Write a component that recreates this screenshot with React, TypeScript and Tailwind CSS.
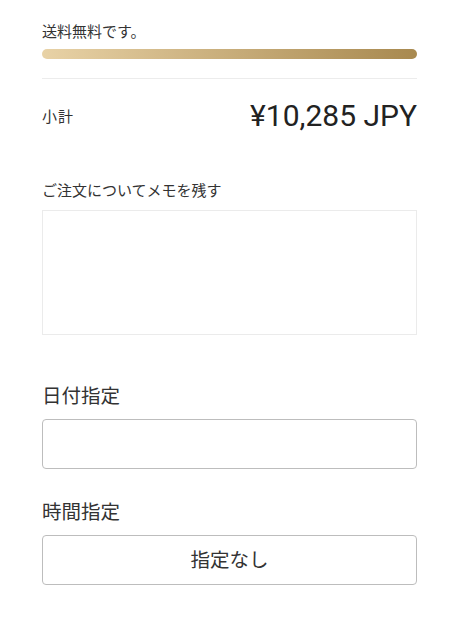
import React from 'react';

const App: React.FC = () => {
  return (
    <div className="min-h-screen w-full bg-white pl-[42px] pr-[57px] pt-[20px] font-['Noto_Sans','Noto_Sans_CJK_JP',sans-serif] text-[#333]">
      <p className="text-[15px] leading-[22px]">送料無料です。</p>
      <div className="mt-[7px] h-[10px] w-full rounded-full bg-gradient-to-r from-[#e8d2a6] to-[#a8894f]" />
      <div className="mt-[19px] h-px w-full bg-[#ececec]" />

      <div className="mt-[19px] flex items-center justify-between">
        <span className="text-[15px] leading-[22px] tracking-[1px]">小計</span>
        <span className="font-['Roboto',sans-serif] text-[30px] leading-[36px] text-[#222]">¥10,285 JPY</span>
      </div>

      <label className="mt-[45px] block text-[15px] leading-[22px]">ご注文についてメモを残す</label>
      <textarea className="mt-[9px] block h-[125px] w-full resize-none border border-[#ebebeb] outline-none" />

      <label className="mt-[48px] block text-[19.5px] leading-[26px]">日付指定</label>
      <input type="text" className="mt-[10px] block h-[50px] w-full rounded-[4px] border border-[#bdbdbd] outline-none" />

      <label className="mt-[30px] block text-[19.5px] leading-[26px]">時間指定</label>
      <button className="mt-[10px] flex h-[50px] w-full items-center justify-center rounded-[4px] border border-[#bdbdbd] bg-white text-[19.5px]">
        指定なし
      </button>
    </div>
  );
};

export default App;
